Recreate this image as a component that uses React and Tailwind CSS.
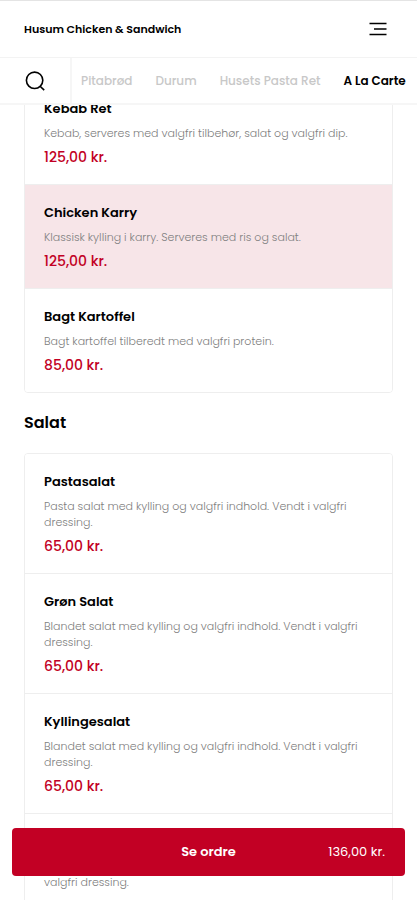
import { useState } from 'react';

const SECTIONS = [
  {
    title: null,
    items: [
      { name: 'Kebab Ret', text: 'Kebab, serveres med valgfri tilbehør, salat og valgfri dip.', price: '125,00 kr.' },
      { name: 'Chicken Karry', text: 'Klassisk kylling i karry. Serveres med ris og salat.', price: '125,00 kr.', selected: true },
      { name: 'Bagt Kartoffel', text: 'Bagt kartoffel tilberedt med valgfri protein.', price: '85,00 kr.' },
    ],
  },
  {
    title: 'Salat',
    items: [
      { name: 'Pastasalat', text: 'Pasta salat med kylling og valgfri indhold. Vendt i valgfri dressing.', price: '65,00 kr.' },
      { name: 'Grøn Salat', text: 'Blandet salat med kylling og valgfri indhold. Vendt i valgfri dressing.', price: '65,00 kr.' },
      { name: 'Kyllingesalat', text: 'Blandet salat med kylling og valgfri indhold. Vendt i valgfri dressing.', price: '65,00 kr.' },
      { name: 'Tunsalat', text: 'Blandet salat med tun, majs og andet indhold. Vendt i\nvalgfri dressing.', price: '65,00 kr.' },
    ],
  },
];

const CATEGORIES = ['Pitabrød', 'Durum', 'Husets Pasta Ret', 'A La Carte'];

function MenuItem({ item }) {
  return (
    <li className={`border-b border-[#eeeeee] px-[19px] pt-4 pb-[15px] last:border-b-0 ${item.selected ? 'bg-[#f7e5e8]' : 'bg-white'}`}>
      <h3 className="text-[13px] leading-6 font-semibold text-black">{item.name}</h3>
      <p className="mt-1 text-[11px] leading-4 font-light whitespace-pre-line text-[#808080]">{item.text}</p>
      <p className="mt-1 text-[14px] leading-6 font-medium text-[#c20024]">{item.price}</p>
    </li>
  );
}

export default function App() {
  const [active, setActive] = useState('A La Carte');

  return (
    <div className="relative flex h-screen flex-col overflow-hidden bg-white font-[Poppins,Inter,sans-serif]">
      <header className="flex h-[58px] shrink-0 items-center justify-between border-t border-b border-t-[#e4e4e4] border-b-[#f3f3f3] pr-[30px] pl-6">
        <h1 className="text-[11px] leading-4 font-semibold text-black">Husum Chicken &amp; Sandwich</h1>
        <button type="button" aria-label="Menu" className="text-black">
          <svg width="18" height="14" viewBox="0 0 18 14" fill="none" stroke="currentColor" strokeWidth="1.6">
            <path d="M0.5 1.5H17.5M5 7H17.5M0.5 12.5H17.5" />
          </svg>
        </button>
      </header>

      <nav className="flex h-[47px] shrink-0 border-b-2 border-[#f6f6f6]">
        <button type="button" aria-label="Søg" className="flex w-[72px] shrink-0 items-center justify-center border-r-2 border-[#f6f6f6] text-black">
          <svg width="20" height="20" viewBox="0 0 20 20" fill="none" stroke="currentColor" strokeWidth="1.6">
            <circle cx="9.6" cy="9.3" r="8.2" />
            <path d="M14.8 15L19.2 19.2" />
          </svg>
        </button>
        <div className="flex min-w-0 flex-1 items-center gap-[23px] overflow-hidden pl-[9px]">
          {CATEGORIES.map((category) => (
            <button
              key={category}
              type="button"
              onClick={() => setActive(category)}
              className={`shrink-0 text-[12px] leading-4 whitespace-nowrap ${category === active ? 'font-semibold text-black' : 'font-medium text-[#c8c8c8]'}`}
            >
              {category}
            </button>
          ))}
        </div>
      </nav>

      <main className="min-h-0 flex-1 overflow-hidden px-6">
        {/* listen er scrollet lidt ned under kategorierne */}
        <div className="-mt-[25px]">
          {SECTIONS.map((section) => (
            <section key={section.items[0].name}>
              {section.title && (
                <h2 className="my-[18px] text-[16px] leading-6 font-semibold text-black">{section.title}</h2>
              )}
              <ul className="overflow-hidden rounded border border-[#eeeeee]">
                {section.items.map((item) => (
                  <MenuItem key={item.name} item={item} />
                ))}
              </ul>
            </section>
          ))}
        </div>
      </main>

      <button
        type="button"
        className="absolute inset-x-3 bottom-6 grid h-12 grid-cols-3 items-center rounded bg-[#c20024] px-5 text-white"
      >
        <span className="col-start-2 text-center text-[13px] leading-5 font-semibold">Se ordre</span>
        <span className="text-right text-[13px] leading-5">136,00 kr.</span>
      </button>
    </div>
  );
}
